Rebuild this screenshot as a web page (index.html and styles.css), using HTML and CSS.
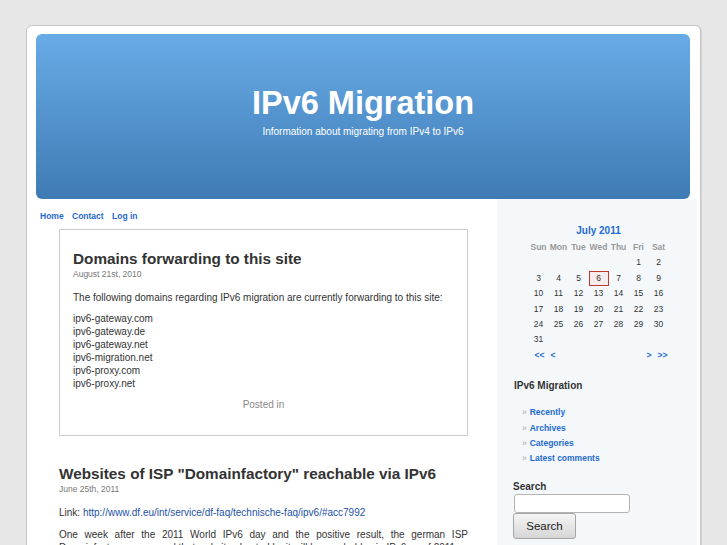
FILE: index.html
```html
<!DOCTYPE html>
<html lang="en">
<head>
<meta charset="utf-8">
<title>IPv6 Migration</title>
<link rel="stylesheet" href="styles.css">
</head>
<body>
<div class="page">
  <header class="header">
    <h1 class="site-title">IPv6 Migration</h1>
    <p class="site-desc">Information about migrating from IPv4 to IPv6</p>
  </header>
  <div class="content">
    <main class="main">
      <nav class="nav"><a href="#">Home</a><a href="#">Contact</a><a href="#">Log in</a></nav>
      <div class="posts">
        <article class="post post-boxed">
          <h2 class="post-title">Domains forwarding to this site</h2>
          <div class="post-date">August 21st, 2010</div>
          <p class="post-text">The following domains regarding IPv6 migration are currently forwarding to this site:</p>
          <p class="post-list">ipv6-gateway.com<br>ipv6-gateway.de<br>ipv6-gateway.net<br>ipv6-migration.net<br>ipv6-proxy.com<br>ipv6-proxy.net</p>
          <p class="post-meta">Posted in</p>
        </article>
        <article class="post">
          <h2 class="post-title">Websites of ISP "Domainfactory" reachable via IPv6</h2>
          <div class="post-date">June 25th, 2011</div>
          <p class="post-text">Link: <a class="post-link" href="#">http://www.df.eu/int/service/df-faq/technische-faq/ipv6/#acc7992</a></p>
          <p class="post-text justify">One week after the 2011 World IPv6 day and the positive result, the german ISP Domainfactory announced that websites hosted by it will be reachable via IPv6 as of 2011.</p>
        </article>
      </div>
    </main>
    <aside class="sidebar">
      <table class="calendar">
        <caption>July 2011</caption>
        <thead>
          <tr><th>Sun</th><th>Mon</th><th>Tue</th><th>Wed</th><th>Thu</th><th>Fri</th><th>Sat</th></tr>
        </thead>
        <tbody>
          <tr><td></td><td></td><td></td><td></td><td></td><td>1</td><td>2</td></tr>
          <tr><td>3</td><td>4</td><td>5</td><td class="today">6</td><td>7</td><td>8</td><td>9</td></tr>
          <tr><td>10</td><td>11</td><td>12</td><td>13</td><td>14</td><td>15</td><td>16</td></tr>
          <tr><td>17</td><td>18</td><td>19</td><td>20</td><td>21</td><td>22</td><td>23</td></tr>
          <tr><td>24</td><td>25</td><td>26</td><td>27</td><td>28</td><td>29</td><td>30</td></tr>
          <tr><td>31</td><td></td><td></td><td></td><td></td><td></td><td></td></tr>
        </tbody>
        <tfoot>
          <tr><td colspan="3" class="cal-prev"><a href="#">&lt;&lt;</a><a class="cal-gap-l" href="#">&lt;</a></td><td></td><td colspan="3" class="cal-next"><a class="cal-gap-r" href="#">&gt;</a><a href="#">&gt;&gt;</a></td></tr>
        </tfoot>
      </table>
      <h2 class="widget-title">IPv6 Migration</h2>
      <ul class="widget-list">
        <li><a href="#">Recently</a></li>
        <li><a href="#">Archives</a></li>
        <li><a href="#">Categories</a></li>
        <li><a href="#">Latest comments</a></li>
      </ul>
      <form class="search">
        <label class="search-label" for="s">Search</label>
        <input class="search-input" id="s" type="text">
        <button class="search-button" type="button">Search</button>
      </form>
    </aside>
  </div>
</div>
</body>
</html>
```
FILE: styles.css
```css
* { box-sizing: border-box; }
html, body { margin: 0; padding: 0; }
body {
  background: #e7e7e7;
  font-family: "Liberation Sans", Arial, sans-serif;
  color: #333;
}
a { text-decoration: none; color: #1f6ad0; }

.page {
  width: 675px;
  margin: 25px 0 0 26px;
  border: 1px solid #c6c6c6;
  border-radius: 6px;
  background: #fff;
  padding-top: 8px;
  min-height: 560px;
  box-shadow: 1px 0 0 #d4d4d4;
}

.header {
  margin-left: 9px;
  width: 654px;
  height: 165px;
  border-radius: 6px;
  background: linear-gradient(#69abe7, #3e7bb4);
  color: #fff;
  text-align: center;
  padding-top: 53px;
}
.site-title {
  margin: 0;
  font-size: 32.5px;
  line-height: 32px;
  font-weight: bold;
}
.site-desc {
  margin: 7px 0 0;
  font-size: 10px;
  line-height: 12px;
}

.content { display: flex; align-items: stretch; }

.main { width: 470px; }
.nav {
  padding: 11px 0 0 13px;
  font-size: 8.5px;
  line-height: 12px;
  font-weight: bold;
  display: flex;
  gap: 8.4px;
}

.posts { margin: 7px 0 0 32px; width: 409px; }
.post { margin-bottom: 29px; }
.post-boxed {
  border: 1px solid #ccc;
  padding: 20px 13px 24px;
}
.post-title {
  margin: 0;
  font-size: 15.3px;
  line-height: 18px;
  font-weight: bold;
  color: #333;
}
.post-date {
  margin-top: 1px;
  font-size: 8.5px;
  line-height: 11px;
  color: #777;
}
.post-text {
  margin: 11px 0 0;
  font-size: 10px;
  line-height: 13px;
}
.post-text + .post-text { margin-top: 9px; }
.justify { text-align: justify; }
.post-link { color: #2452a8; }
.post-list {
  margin: 8px 0 0;
  font-size: 10px;
  line-height: 13px;
}
.post-meta {
  margin: 8px 0 0;
  font-size: 10px;
  line-height: 13px;
  color: #888;
  text-align: center;
}

.sidebar {
  width: 200px;
  background: #f4f8fb;
  padding: 25px 13px 0 16px;
  min-height: 360px;
}

.calendar {
  width: 140px;
  margin: 0 auto;
  border-collapse: collapse;
  border-spacing: 0;
}
.calendar caption {
  font-size: 10px;
  line-height: 13px;
  font-weight: bold;
  color: #1f6ad0;
  padding-bottom: 3px;
}
.calendar th, .calendar td {
  width: 20px;
  height: 15.4px;
  padding: 0;
  text-align: center;
  font-size: 8.5px;
  line-height: 15.4px;
}
.calendar th { color: #999; font-weight: bold; }
.calendar td { color: #333; }
.calendar .today {
  background: #f7ebee;
  box-shadow: inset 0 0 0 1px #c0392b;
}
.calendar tfoot td {
  height: 14px;
  line-height: 14px;
  font-weight: bold;
}
.calendar .cal-prev { text-align: left; padding-left: 6px; }
.calendar .cal-next { text-align: right; padding-right: 1px; }
.cal-gap-l { margin-left: 6px; }
.cal-gap-r { margin-right: 6px; }

.widget-title {
  margin: 17px 0 0 1px;
  font-size: 10px;
  line-height: 13px;
  font-weight: bold;
  color: #333;
}
.widget-list {
  list-style: none;
  margin: 13.5px 0 0;
  padding: 0 0 0 9px;
}
.widget-list li {
  font-size: 8.5px;
  line-height: 15.3px;
  font-weight: bold;
}
.widget-list li::before {
  content: "\00BB";
  color: #aaa;
  font-weight: normal;
  margin-right: 3px;
}

.search { margin-top: 13.5px; }
.search-label {
  display: block;
  font-size: 10px;
  line-height: 13px;
  font-weight: bold;
  color: #333;
}
.search-input {
  display: block;
  margin: 1px 0 0 1px;
  width: 116px;
  height: 19px;
  border: 1px solid #b4b4b4;
  border-radius: 3px;
  background: #fff;
  padding: 0 3px;
}
.search-button {
  display: block;
  width: 63px;
  height: 26px;
  padding: 0;
  border: 1px solid #a5a5a5;
  border-radius: 3px;
  background: linear-gradient(#f5f5f5, #d6d6d6);
  font-family: "Liberation Sans", Arial, sans-serif;
  font-size: 11.5px;
  color: #222;
}
```
